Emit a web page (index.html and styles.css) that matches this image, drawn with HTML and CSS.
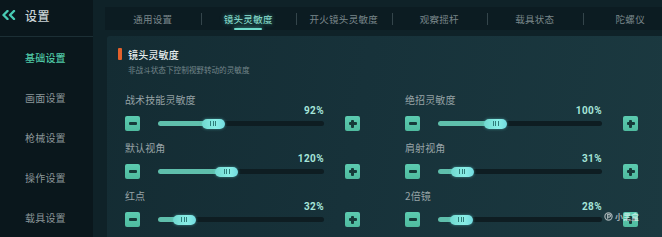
FILE: index.html
```html
<!DOCTYPE html>
<html lang="zh">
<head>
<meta charset="utf-8">
<title>设置</title>
<link rel="stylesheet" href="styles.css">
</head>
<body>
<div class="app">
  <aside class="sidebar">
    <div class="side-head">
      <svg class="back" width="15" height="10" viewBox="0 0 15 10"><polyline points="6.5,1 2.5,5 6.5,9" /><polyline points="13,1 9,5 13,9" /></svg>
      <span class="side-title">设置</span>
    </div>
    <nav class="nav">
      <div class="nav-item active">基础设置</div>
      <div class="nav-item">画面设置</div>
      <div class="nav-item">枪械设置</div>
      <div class="nav-item">操作设置</div>
      <div class="nav-item">载具设置</div>
    </nav>
  </aside>
  <main class="main">
    <div class="tabs">
      <div class="tab">通用设置</div>
      <div class="tab active">镜头灵敏度</div>
      <div class="tab">开火镜头灵敏度</div>
      <div class="tab">观察摇杆</div>
      <div class="tab">载具状态</div>
      <div class="tab">陀螺仪</div>
    </div>
    <section class="panel">
      <div class="panel-title"><span class="marker"></span>镜头灵敏度</div>
      <div class="panel-sub">非战斗状态下控制视野转动的灵敏度</div>
      <div class="grid">
        <div class="setting">
          <div class="label">战术技能灵敏度</div>
          <div class="value">92%</div>
          <div class="controls">
            <div class="btn minus"></div>
            <div class="track" style="--v:33%"><div class="fill"></div><div class="thumb"><i></i><i></i><i></i></div></div>
            <div class="btn plus"></div>
          </div>
        </div>
        <div class="setting">
          <div class="label">绝招灵敏度</div>
          <div class="value">100%</div>
          <div class="controls">
            <div class="btn minus"></div>
            <div class="track" style="--v:35%"><div class="fill"></div><div class="thumb"><i></i><i></i><i></i></div></div>
            <div class="btn plus"></div>
          </div>
        </div>
        <div class="setting">
          <div class="label">默认视角</div>
          <div class="value">120%</div>
          <div class="controls">
            <div class="btn minus"></div>
            <div class="track" style="--v:41%"><div class="fill"></div><div class="thumb"><i></i><i></i><i></i></div></div>
            <div class="btn plus"></div>
          </div>
        </div>
        <div class="setting">
          <div class="label">肩射视角</div>
          <div class="value">31%</div>
          <div class="controls">
            <div class="btn minus"></div>
            <div class="track" style="--v:14.6%"><div class="fill"></div><div class="thumb"><i></i><i></i><i></i></div></div>
            <div class="btn plus"></div>
          </div>
        </div>
        <div class="setting">
          <div class="label">红点</div>
          <div class="value">32%</div>
          <div class="controls">
            <div class="btn minus"></div>
            <div class="track" style="--v:15.5%"><div class="fill"></div><div class="thumb"><i></i><i></i><i></i></div></div>
            <div class="btn plus"></div>
          </div>
        </div>
        <div class="setting">
          <div class="label">2倍镜</div>
          <div class="value">28%</div>
          <div class="controls">
            <div class="btn minus"></div>
            <div class="track" style="--v:14%"><div class="fill"></div><div class="thumb"><i></i><i></i><i></i></div></div>
            <div class="btn plus"></div>
          </div>
        </div>
      </div>
    </section>
  </main>
  <div class="watermark">
    <svg width="9" height="9" viewBox="0 0 10 10"><circle cx="5" cy="5" r="4" /><path d="M4 7.5 V3 H6 A1.3 1.3 0 0 1 6 5.6 H4" /></svg>
    <span>小黑盒</span>
  </div>
</div>
</body>
</html>
```

FILE: styles.css
```css
* { box-sizing: border-box; }
html, body { margin: 0; padding: 0; }
body {
  width: 662px;
  height: 237px;
  overflow: hidden;
  background: #0f2228;
  font-family: "Noto Sans CJK SC", "Noto Sans", sans-serif;
}
.app {
  position: relative;
  display: flex;
  width: 662px;
  height: 237px;
}
.sidebar {
  width: 93px;
  flex: none;
  background: #0a171c;
  display: flex;
  flex-direction: column;
}
.side-head {
  height: 38px;
  border-bottom: 1px solid #1c2f35;
  display: flex;
  align-items: center;
  padding-left: 1px;
  padding-bottom: 6px;
  gap: 9px;
}
.back polyline {
  fill: none;
  stroke: #48ccb4;
  stroke-width: 2.4;
  stroke-linecap: round;
  stroke-linejoin: round;
}
.side-title {
  font-size: 12px;
  color: #c9d3d5;
  font-weight: 500;
  letter-spacing: 0.5px;
}
.nav {
  display: flex;
  flex-direction: column;
}
.nav-item {
  height: 40px;
  display: flex;
  align-items: center;
  padding-left: 25px;
  font-size: 10px;
  color: #8b9699;
  letter-spacing: 0.2px;
}
.nav-item.active {
  color: #4fc7a5;
  font-weight: 500;
}
.main {
  flex: 1;
  min-width: 0;
  padding-left: 12px;
  display: flex;
  flex-direction: column;
}
.tabs {
  margin-top: 7px;
  height: 23px;
  background: #0c1c22;
  display: flex;
  overflow: hidden;
}
.tab {
  position: relative;
  flex: none;
  width: 95.5px;
  display: flex;
  align-items: center;
  justify-content: center;
  font-size: 9.5px;
  letter-spacing: 0.3px;
  color: #7a878b;
}
.tab + .tab::before {
  content: "";
  position: absolute;
  left: 0;
  top: 6px;
  width: 1px;
  height: 12px;
  background: #34454b;
}
.tab.active {
  color: #8fe3d5;
  text-shadow: 0 0 4px rgba(90, 220, 200, 0.55);
}
.tab.active::after {
  content: "";
  position: absolute;
  left: 50%;
  bottom: 0;
  width: 28px;
  margin-left: -14px;
  height: 2px;
  border-radius: 1px;
  background: #6fdccb;
  box-shadow: 0 0 4px rgba(100, 230, 210, 0.8);
}
.panel {
  flex: 1;
  margin-top: 6px;
  margin-left: 2px;
  border-top-left-radius: 3px;
  background: linear-gradient(100deg, #142c33 0%, #17323a 45%, #1b3940 100%);
  padding: 12px 0 0 11px;
}
.panel-title {
  display: flex;
  align-items: center;
  gap: 6px;
  height: 12px;
  font-size: 10px;
  font-weight: 500;
  color: #e5ecec;
  letter-spacing: 0.2px;
}
.marker {
  width: 4px;
  height: 12px;
  border-radius: 1px;
  background: #e2602b;
}
.panel-sub {
  margin-top: 4px;
  padding-left: 10px;
  line-height: 12px;
  font-size: 7.6px;
  color: #73858a;
}
.grid {
  margin-top: 18px;
  margin-left: 7px;
  display: grid;
  grid-template-columns: 235px 233px;
  column-gap: 45px;
  row-gap: 11px;
}
.setting {
  display: flex;
  flex-direction: column;
}
.label {
  line-height: 12px;
  height: 12px;
  font-size: 10px;
  color: #97a3a6;
  letter-spacing: 0.1px;
}
.value {
  height: 10px;
  line-height: 10px;
  text-align: right;
  padding-right: 36px;
  font-family: Roboto, "Noto Sans", sans-serif;
  font-weight: 700;
  font-size: 10px;
  letter-spacing: 0.4px;
  color: #a6e5d9;
}
.controls {
  height: 15px;
  display: flex;
  align-items: center;
}
.btn {
  position: relative;
  flex: none;
  width: 15px;
  height: 15px;
  border-radius: 2px;
  background: linear-gradient(180deg, #5ccbb0, #4fbb9f);
}
.btn::before {
  content: "";
  position: absolute;
  left: 3.5px;
  top: 6.25px;
  width: 8px;
  height: 2.5px;
  border-radius: 1px;
  background: #163a39;
}
.btn.plus::after {
  content: "";
  position: absolute;
  left: 6.25px;
  top: 3.5px;
  width: 2.5px;
  height: 8px;
  border-radius: 1px;
  background: #163a39;
}
.track {
  position: relative;
  flex: 1;
  height: 5px;
  margin: 0 21px 0 18px;
  border-radius: 3px;
  background: #0e1d22;
}
.fill {
  position: absolute;
  left: 0;
  top: 0;
  bottom: 0;
  width: var(--v);
  border-radius: 3px;
  background: #5fbfac;
}
.thumb {
  position: absolute;
  top: -2.5px;
  left: calc(var(--v) - 11px);
  width: 23px;
  height: 10px;
  border-radius: 5px;
  background: linear-gradient(90deg, #6fd8cf, #8aeee6 60%, #72dbe0);
  box-shadow: 0 0 3px rgba(110, 230, 225, 0.5);
  display: flex;
  align-items: center;
  justify-content: center;
  gap: 1.5px;
}
.thumb i {
  display: block;
  width: 1px;
  height: 5px;
  background: #2f7d7a;
}
.watermark {
  position: absolute;
  left: 604px;
  top: 211px;
  display: flex;
  align-items: center;
  gap: 2px;
  font-size: 8px;
  font-weight: 700;
  color: rgba(255, 255, 255, 0.6);
}
.watermark svg circle, .watermark svg path {
  fill: none;
  stroke: rgba(255, 255, 255, 0.6);
  stroke-width: 1.4;
}
```
